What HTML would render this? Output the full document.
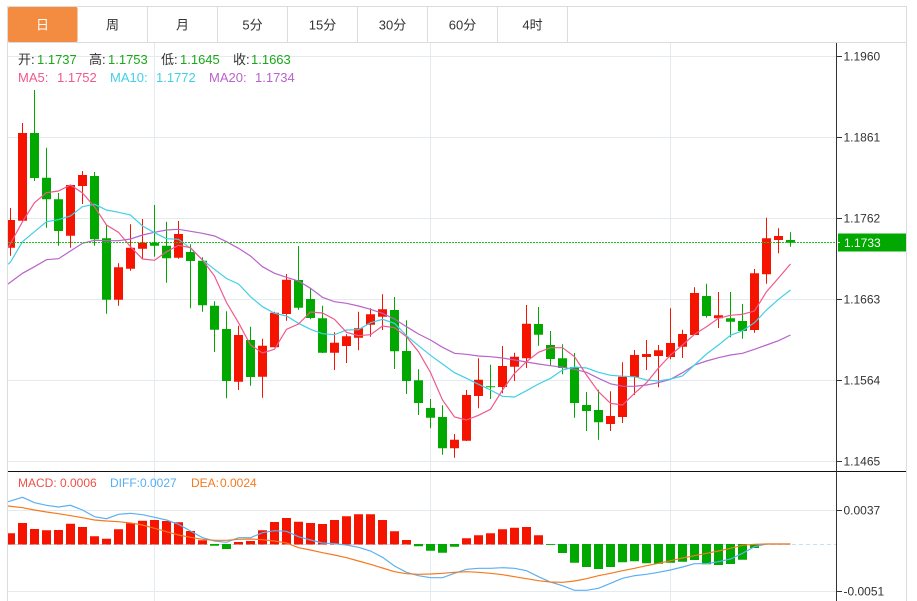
<!DOCTYPE html>
<html lang="zh">
<head>
<meta charset="utf-8">
<title>K线图</title>
<style>
html,body{margin:0;padding:0;background:#fff;width:917px;height:601px;overflow:hidden}
svg{display:block}
text{font-family:"Liberation Sans","Noto Sans CJK SC",sans-serif}
.tab{font-size:13px;fill:#333;text-anchor:middle}
.ax{font-size:12px;fill:#333}
.lg{font-size:13px}
.mc{font-size:12px}
</style>
</head>
<body>
<svg width="917" height="601" viewBox="0 0 917 601" xmlns="http://www.w3.org/2000/svg">
<defs><clipPath id="c"><rect x="8" y="43" width="828" height="558"/></clipPath></defs>
<rect width="917" height="601" fill="#fff"/>

<!-- grid -->
<path d="M8 56.5H836M8 137.5H836M8 218.5H836M8 299.5H836M8 380.5H836M8 461.5H836M8 510.5H836M8 591.5H836M154.5 43V601M430.5 43V601M670.5 43V601" stroke="#e3ebf1" stroke-width="1" fill="none"/>

<!-- frame and tabs -->
<path d="M7.5 6V601M906.5 6V601M7 6.5H907M7 42.5H907M147.5 7V42M217.5 7V42M287.5 7V42M357.5 7V42M427.5 7V42M497.5 7V42M567.5 7V42" stroke="#dcdcdc" fill="none"/>
<rect x="8" y="7" width="69.5" height="35" rx="1.5" fill="#f38b40"/>
<text class="tab" x="42.5" y="29.5" style="fill:#fff">日</text>
<text class="tab" x="112.5" y="29.5">周</text>
<text class="tab" x="182.5" y="29.5">月</text>
<text class="tab" x="252.5" y="29.5">5分</text>
<text class="tab" x="322.5" y="29.5">15分</text>
<text class="tab" x="392.5" y="29.5">30分</text>
<text class="tab" x="462.5" y="29.5">60分</text>
<text class="tab" x="532.5" y="29.5">4时</text>

<g clip-path="url(#c)">
<!-- red candles -->
<path stroke="#f51400" fill="none" d="M10.5 208V255.7M22.5 123V222M70.5 185V247.7M82.5 171V204M118.5 263.3V305.7M130.5 224.3V270.7M142.5 219V259.3M178.5 221V258.7M238.5 325.7V390M262.5 338.7V397.7M274.5 311.7V347.3M286.5 274V320.7M334.5 332.3V370M346.5 334.3V363M358.5 311.7V350.3M370.5 308.3V336.7M382.5 294.3V330M454.5 434V457.7M466.5 390V441M478.5 358.3V408.3M502.5 346V393.3M514.5 352.7V381M526.5 305V368M610.5 391.3V431M622.5 362.3V423M634.5 350V395M646.5 340V370M658.5 345V387.3M670.5 308.3V359.3M682.5 329.7V358M694.5 287.3V335M718.5 292V328M754.5 269V332.7M766.5 217.7V283.7M778.5 228.3V253.3"/>
<path fill="#f51400" d="M6 220h9V247.7h-9zM18 133h9V220.7h-9zM66 185h9V235.7h-9zM78 175h9V186h-9zM114 267.3h9V299.7h-9zM126 247.7h9V268.7h-9zM138 242.7h9V248.7h-9zM174 234h9V257.7h-9zM234 335h9V381.7h-9zM258 345.7h9V376.7h-9zM270 312.7h9V347.3h-9zM282 279.7h9V314h-9zM330 342.7h9V352.7h-9zM342 336.3h9V346h-9zM354 328.3h9V337.7h-9zM366 314.3h9V324.7h-9zM378 309.3h9V316.7h-9zM450 439.7h9V448.3h-9zM462 395h9V440.7h-9zM474 379.7h9V396h-9zM498 366h9V387h-9zM510 356.7h9V366.7h-9zM522 323.7h9V358.3h-9zM606 416h9V424h-9zM618 376.7h9V417h-9zM630 355h9V377h-9zM642 354h9V357h-9zM654 350.3h9V356h-9zM666 343h9V357h-9zM678 334h9V346.7h-9zM690 293h9V335h-9zM714 315.3h9V318.3h-9zM750 273.3h9V330h-9zM762 238.3h9V274.3h-9zM774 236h9V240h-9z"/>
<!-- green candles -->
<path stroke="#00a800" fill="none" d="M34.5 90V181M46.5 147.7V227.7M58.5 193V245.7M94.5 172V245.7M106.5 225V313.7M154.5 205V256.7M166.5 221.7V282.7M190.5 244.3V308.3M202.5 257.3V311.7M214.5 301.3V352M226.5 311.3V398.3M250.5 326.7V385.7M298.5 246V309.7M310.5 288.3V319.3M322.5 305.7V353M394.5 297V369M406.5 320.3V394M418.5 369.3V415M430.5 399V428.3M442.5 405.3V454.7M490.5 364.7V399M538.5 307V345.7M550.5 331V366M562.5 344.3V374.3M574.5 353V417.7M586.5 392V431M598.5 389.7V439.7M706.5 283.7V317.7M730.5 292V337.3M742.5 304V338.7M790.5 232.3V246.7"/>
<path fill="#00a800" d="M30 133h9V178h-9zM42 177.7h9V199.3h-9zM54 199.3h9V231h-9zM90 176h9V239.3h-9zM102 238.3h9V299.7h-9zM150 242.7h9V245.7h-9zM162 245.7h9V258.3h-9zM186 252h9V261h-9zM198 260.7h9V305.3h-9zM210 305.7h9V329.7h-9zM222 329h9V381h-9zM246 340h9V377h-9zM294 280h9V307.7h-9zM306 299h9V318h-9zM318 318.3h9V352.7h-9zM390 310h9V351.3h-9zM402 351h9V381h-9zM414 380.3h9V403h-9zM426 408h9V417.7h-9zM438 417h9V448.3h-9zM486 386.3h9V387.3h-9zM534 324h9V334.7h-9zM546 345h9V359h-9zM558 358.3h9V368h-9zM570 367h9V403h-9zM582 405h9V411h-9zM594 410h9V422.3h-9zM702 296h9V316h-9zM726 318.3h9V321.7h-9zM738 321h9V331h-9zM786 240h9V242.7h-9z"/>

<!-- MA20 -->
<polyline fill="none" stroke="#b963cb" stroke-width="1.2" points="8,284 22.5,273.3 34.5,266.7 46.5,259.7 58.5,258.7 70.5,251 82.5,243.3 94.5,240.3 106.5,240.7 118.5,240.7 130.5,239 142.5,235 154.5,232.3 166.5,230 178.5,229.3 190.5,231.3 202.5,233.3 214.5,236 226.5,241.7 238.5,248.3 250.5,256 262.5,266.7 274.5,273.3 286.5,277.3 298.5,281 310.5,288.3 322.5,297.3 334.5,301.7 346.5,303.3 358.5,306 370.5,309.3 382.5,313.3 394.5,319 406.5,326.7 418.5,334 430.5,340 442.5,347.3 454.5,353.3 466.5,354.3 478.5,356 490.5,356.7 502.5,358 514.5,360 526.5,362 538.5,364 550.5,365.7 562.5,367.3 574.5,369.3 586.5,372.3 598.5,378.3 610.5,383.8 622.5,386.2 634.5,386.3 646.5,385 658.5,382.7 670.5,379.3 682.5,372.7 694.5,365 706.5,361 718.5,357.7 730.5,355 742.5,353.3 754.5,349.3 766.5,345 778.5,340.7 790.5,335"/>
<!-- MA10 -->
<polyline fill="none" stroke="#42cfe6" stroke-width="1.2" points="8,264.3 10.5,262 22.5,241.7 34.5,231.7 46.5,221.7 58.5,219.7 70.5,216 82.5,206.7 94.5,204.3 106.5,210 118.5,212.3 130.5,215 142.5,226 154.5,232.7 166.5,238.7 178.5,239.3 190.5,248.3 202.5,260 214.5,269.3 226.5,278.5 238.5,284 250.5,296.7 262.5,306.7 274.5,313.3 286.5,316 298.5,323.3 310.5,329.3 322.5,333.7 334.5,334.7 346.5,330 358.5,329.7 370.5,322.7 382.5,319.3 394.5,323.3 406.5,335.7 418.5,345.7 430.5,355.3 442.5,364 454.5,372.7 466.5,378.3 478.5,384.3 490.5,390 502.5,396.3 514.5,397 526.5,390.7 538.5,384 550.5,378.3 562.5,370 574.5,367 586.5,368 598.5,372.3 610.5,375.3 622.5,376.2 634.5,376.8 646.5,380 658.5,381 670.5,379 682.5,376 694.5,365 706.5,354 718.5,345 730.5,335.3 742.5,330.7 754.5,322.7 766.5,310 778.5,299.3 790.5,290"/>
<!-- MA5 -->
<polyline fill="none" stroke="#f0588f" stroke-width="1.2" points="8,248 22.5,221.7 34.5,202.7 46.5,192.7 58.5,191 70.5,185 82.5,193 94.5,206.7 106.5,225 118.5,232.3 130.5,246.7 142.5,259 154.5,260.3 166.5,251.7 178.5,245.3 190.5,247.7 202.5,260 214.5,276 226.5,302.5 238.5,322.7 250.5,345 262.5,353 274.5,349.3 286.5,329.3 298.5,324 310.5,312 322.5,313 334.5,319.3 346.5,332.3 358.5,335.7 370.5,334.7 382.5,326 394.5,327.7 406.5,336.7 418.5,351.7 430.5,372.5 442.5,400 454.5,417 466.5,420 478.5,415.3 490.5,409.3 502.5,390 514.5,373.3 526.5,361.7 538.5,352.3 550.5,347.7 562.5,347.7 574.5,356.7 586.5,375 598.5,391.7 610.5,403.3 622.5,405 634.5,393.3 646.5,382.7 658.5,368 670.5,355 682.5,345 694.5,334.3 706.5,326.7 718.5,318.3 730.5,315.3 742.5,314.3 754.5,311 766.5,291.7 778.5,278 790.5,264"/>

<!-- last price line -->
<path d="M8 242.5H836" stroke="#1fc01f" stroke-dasharray="2 1" fill="none"/>

<!-- MACD zero line -->
<path d="M8 544.5H836" stroke="#bfe3f2" stroke-width="1" stroke-dasharray="4 3" fill="none"/>
<!-- MACD red -->
<path fill="#f51400" d="M6 533.3h9V544.5h-9zM18 523h9V544.5h-9zM30 529h9V544.5h-9zM42 530.3h9V544.5h-9zM54 530h9V544.5h-9zM66 523.7h9V544.5h-9zM78 527h9V544.5h-9zM90 536.3h9V544.5h-9zM102 538.7h9V544.5h-9zM114 529.3h9V544.5h-9zM126 523.3h9V544.5h-9zM138 520.7h9V544.5h-9zM150 520h9V544.5h-9zM162 521h9V544.5h-9zM174 522.3h9V544.5h-9zM186 531h9V544.5h-9zM198 540.3h9V544.5h-9zM234 542h9V544.5h-9zM246 541h9V544.5h-9zM258 530.3h9V544.5h-9zM270 522h9V544.5h-9zM282 518h9V544.5h-9zM294 521.7h9V544.5h-9zM306 523h9V544.5h-9zM318 524h9V544.5h-9zM330 520h9V544.5h-9zM342 516.3h9V544.5h-9zM354 514.3h9V544.5h-9zM366 514.3h9V544.5h-9zM378 520h9V544.5h-9zM390 531.3h9V544.5h-9zM402 540h9V544.5h-9zM462 538.3h9V544.5h-9zM474 535.3h9V544.5h-9zM486 533.3h9V544.5h-9zM498 529.3h9V544.5h-9zM510 527.7h9V544.5h-9zM522 527h9V544.5h-9zM534 535.3h9V544.5h-9z"/>
<!-- MACD green -->
<path fill="#00a800" d="M210 544h9V545.7h-9zM222 544h9V549h-9zM414 544h9V546.3h-9zM426 544h9V550.7h-9zM438 544h9V552.7h-9zM450 544h9V546.7h-9zM546 544h9V544.9h-9zM558 544h9V553h-9zM570 544h9V562.7h-9zM582 544h9V567h-9zM594 544h9V569h-9zM606 544h9V567h-9zM618 544h9V562.3h-9zM630 544h9V561.3h-9zM642 544h9V563.3h-9zM654 544h9V563.7h-9zM666 544h9V562.7h-9zM678 544h9V561.7h-9zM690 544h9V560h-9zM702 544h9V564.3h-9zM714 544h9V565h-9zM726 544h9V564h-9zM738 544h9V559.7h-9zM750 544h9V548h-9z"/>
<!-- DIFF -->
<polyline fill="none" stroke="#5cb0f2" stroke-width="1.2" points="8,501.7 22.5,497.3 34.5,502.7 46.5,505.3 58.5,507 70.5,505.3 82.5,510 94.5,516.7 106.5,518.7 118.5,514.3 130.5,513.3 142.5,514.7 154.5,517.3 166.5,520 178.5,524.3 190.5,531 202.5,537.7 214.5,541 226.5,542.3 238.5,537.7 250.5,537.7 262.5,532.7 274.5,530.7 286.5,531.3 298.5,536.7 310.5,540 322.5,543 334.5,543.7 346.5,545 358.5,547.3 370.5,551 382.5,557.3 394.5,566 406.5,572.3 418.5,575.7 430.5,577.7 442.5,577.7 454.5,573.3 466.5,569.3 478.5,568.3 490.5,568.3 502.5,567.7 514.5,568.3 526.5,570.7 538.5,576.7 550.5,582 562.5,585.7 574.5,590.3 586.5,590.3 598.5,588.3 610.5,583.3 622.5,578.3 634.5,575.7 646.5,574.3 658.5,572.3 670.5,570 682.5,567 694.5,563.7 706.5,563.7 718.5,561.7 730.5,559 742.5,553.3 754.5,546.7 766.5,544 790.5,544"/>
<!-- DEA -->
<polyline fill="none" stroke="#f5791f" stroke-width="1.2" points="8,506 22.5,507.7 34.5,510 46.5,512 58.5,513.7 70.5,515.7 82.5,517.7 94.5,520 106.5,521 118.5,521.7 130.5,523 142.5,525 154.5,528.3 166.5,531.7 178.5,535 190.5,537.3 202.5,539.3 214.5,540.3 226.5,540.3 238.5,539.3 250.5,539 262.5,539.7 274.5,541 286.5,543 298.5,547.7 310.5,550 322.5,552.7 334.5,555 346.5,557.7 358.5,561 370.5,564.3 382.5,568 394.5,571.7 406.5,573.7 418.5,574.3 430.5,574 442.5,573.3 454.5,572.3 466.5,571.7 478.5,572.3 490.5,573.3 502.5,574.7 514.5,576.7 526.5,578.7 538.5,580.7 550.5,582 562.5,582.3 574.5,581 586.5,578.7 598.5,575.7 610.5,573.3 622.5,570.7 634.5,568.3 646.5,565.7 658.5,563.3 670.5,560.7 682.5,558 694.5,555.7 706.5,553.3 718.5,551 730.5,548.3 742.5,545.3 754.5,544.3 766.5,544 790.5,544"/>
</g>

<!-- divider and axis -->
<path d="M8 471.5H906" stroke="#111" fill="none"/>
<path d="M836.5 43V601" stroke="#333" fill="none"/>
<path d="M837 56.5h5M837 137.5h5M837 218.5h5M837 299.5h5M837 380.5h5M837 461.5h5M837 510.5h5M837 591.5h5" stroke="#333" fill="none"/>

<text class="ax" x="843.5" y="60.5">1.1960</text>
<text class="ax" x="843.5" y="141.5">1.1861</text>
<text class="ax" x="843.5" y="222.5">1.1762</text>
<text class="ax" x="843.5" y="303.5">1.1663</text>
<text class="ax" x="843.5" y="384.5">1.1564</text>
<text class="ax" x="843.5" y="465.5">1.1465</text>
<text class="ax" x="843.5" y="514.5">0.0037</text>
<text class="ax" x="843.5" y="595.5">-0.0051</text>

<rect x="838" y="233.5" width="68" height="18" fill="#00a800"/>
<path d="M837 242.5h3" stroke="#fff" fill="none"/>
<text class="ax" x="844" y="247" style="fill:#fff">1.1733</text>

<!-- legends -->
<text class="lg" x="18" y="64" fill="#333">开:</text><text class="lg" x="37" y="64" fill="#1aa81a">1.1737</text>
<text class="lg" x="89" y="64" fill="#333">高:</text><text class="lg" x="108" y="64" fill="#1aa81a">1.1753</text>
<text class="lg" x="161" y="64" fill="#333">低:</text><text class="lg" x="180" y="64" fill="#1aa81a">1.1645</text>
<text class="lg" x="233" y="64" fill="#333">收:</text><text class="lg" x="251" y="64" fill="#1aa81a">1.1663</text>

<text class="lg" x="18" y="82" fill="#f0588f">MA5:</text><text class="lg" x="57" y="82" fill="#f0588f">1.1752</text>
<text class="lg" x="110" y="82" fill="#42cfe6">MA10:</text><text class="lg" x="156" y="82" fill="#42cfe6">1.1772</text>
<text class="lg" x="209" y="82" fill="#b963cb">MA20:</text><text class="lg" x="255" y="82" fill="#b963cb">1.1734</text>

<text class="mc" x="18" y="487" fill="#f0504a">MACD:</text><text class="mc" x="60" y="487" fill="#f0504a">0.0006</text>
<text class="mc" x="110" y="487" fill="#56aef0">DIFF:</text><text class="mc" x="140" y="487" fill="#56aef0">0.0027</text>
<text class="mc" x="191" y="487" fill="#f5791f">DEA:</text><text class="mc" x="220" y="487" fill="#f5791f">0.0024</text>
</svg>
</body>
</html>
